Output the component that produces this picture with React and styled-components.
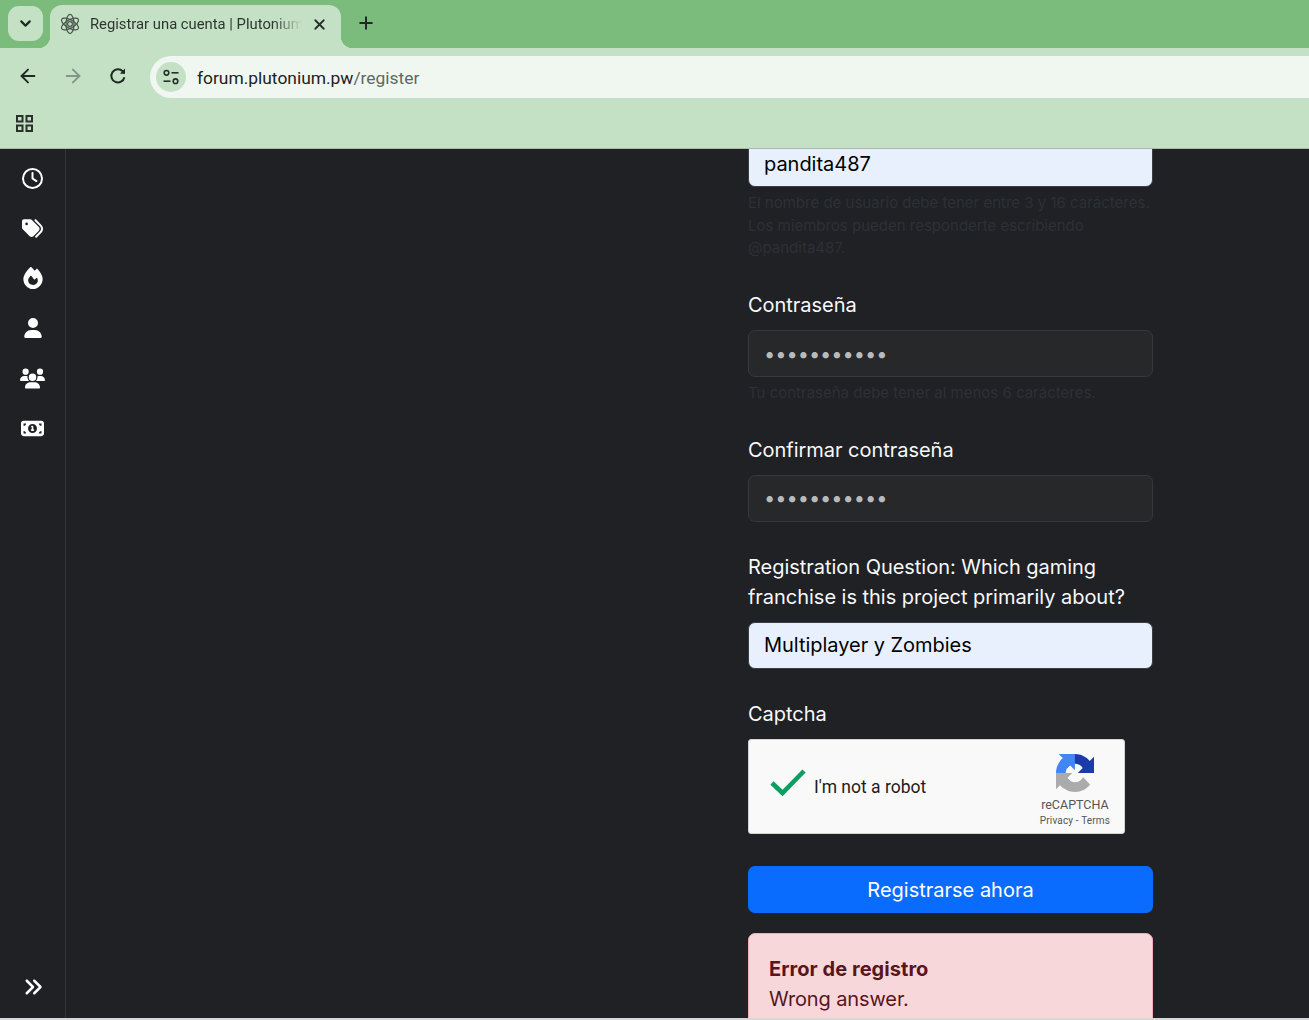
import React from 'react';
import styled, { createGlobalStyle } from 'styled-components';
import { ArrowLeft, ArrowRight, ChevronDown, Plus, X } from 'lucide-react';
import {
  FaRegClock,
  FaTags,
  FaFire,
  FaUser,
  FaUsers,
  FaMoneyBill1,
  FaAnglesRight
} from 'react-icons/fa6';

const GlobalStyle = createGlobalStyle`
  html, body {
    margin: 0;
    padding: 0;
    height: 100%;
    overflow: hidden;
    background: #1f2125;
  }
  #root {
    height: 100%;
  }
  * {
    box-sizing: border-box;
  }
`;

const AtomIcon = () => (
  <svg width="22" height="22" viewBox="0 0 22 22" fill="none" stroke="#46544a" strokeWidth="1.2">
    <ellipse cx="11" cy="11" rx="9.6" ry="4" transform="rotate(30 11 11)" />
    <ellipse cx="11" cy="11" rx="9.6" ry="4" transform="rotate(90 11 11)" />
    <ellipse cx="11" cy="11" rx="9.6" ry="4" transform="rotate(150 11 11)" />
    <circle cx="11" cy="11" r="2.4" />
  </svg>
);

const ReloadIcon = () => (
  <svg width="20" height="20" viewBox="0 0 20 20" fill="none" stroke="#1f2a22" strokeWidth="2">
    <path d="M16.4 11.2a6.6 6.6 0 1 1-1.7-5.9l1.8 1.9" />
    <path d="M17 2.6v5.2h-5.2" fill="#1f2a22" stroke="none" />
  </svg>
);

const TuneIcon = () => (
  <svg width="18" height="18" viewBox="0 0 18 18" fill="none" stroke="#26302a" strokeWidth="1.6">
    <circle cx="4.5" cy="4.8" r="2.3" />
    <path d="M9.5 4.8h7" />
    <circle cx="13.5" cy="13.2" r="2.3" />
    <path d="M1.5 13.2h7" />
  </svg>
);

const AppsIcon = () => (
  <svg width="20" height="20" viewBox="0 0 20 20" fill="none" stroke="#2a302c" strokeWidth="2">
    <rect x="2" y="2" width="5.5" height="5.5" />
    <rect x="11.5" y="2" width="5.5" height="5.5" />
    <rect x="2" y="11.5" width="5.5" height="5.5" />
    <rect x="11.5" y="11.5" width="5.5" height="5.5" />
  </svg>
);

const RecaptchaLogo = () => (
  <svg width="38" height="38" viewBox="0 0 64 64">
    <path
      d="M64 31.955l-.033-1.37V4.687l-7.16 7.16C50.948 4.674 42.033.093 32.05.093c-10.4 0-19.622 4.96-25.458 12.64l11.736 11.86a15.55 15.55 0 0 1 4.754-5.334c2.05-1.6 4.952-2.906 8.968-2.906.485 0 .86.057 1.135.163 4.976.393 9.288 3.14 11.828 7.124l-8.307 8.307 26.2.001"
      fill="#1c3aa9"
    />
    <path
      d="M31.862.001l-1.37.033H4.594l7.16 7.16C4.58 13.053 0 21.968 0 31.95c0 10.4 4.96 19.622 12.64 25.458l11.86-11.736a15.55 15.55 0 0 1-5.334-4.754c-1.6-2.05-2.906-4.952-2.906-8.968 0-.485.057-.86.163-1.135.393-4.976 3.14-9.288 7.124-11.828l8.307 8.307.001-26.2"
      fill="#4285f4"
    />
    <path
      d="M.001 32l.033 1.37v25.898l7.16-7.16c5.86 7.173 14.774 11.754 24.76 11.754 10.4 0 19.622-4.96 25.458-12.64l-11.736-11.86a15.55 15.55 0 0 1-4.754 5.334c-2.05 1.6-4.952 2.906-8.968 2.906-.485 0-.86-.057-1.135-.163-4.976-.393-9.288-3.14-11.828-7.124l8.307-8.307-26.2-.001"
      fill="#ababab"
    />
  </svg>
);

const CheckMark = () => (
  <svg width="38" height="30" viewBox="0 0 38 30" fill="none" stroke="#0f9d63" strokeWidth="4.6">
    <path d="M3 15l10.5 10L35 3" />
  </svg>
);

const navItems = [
  { Icon: FaRegClock, size: 21 },
  { Icon: FaTags, size: 21 },
  { Icon: FaFire, size: 22 },
  { Icon: FaUser, size: 20 },
  { Icon: FaUsers, size: 25 },
  { Icon: FaMoneyBill1, size: 23 }
];

const App = () => {
  return (
    <Page>
      <GlobalStyle />
      <BrowserFrame>
        <TabStrip>
          <TabSearch>
            <ChevronDown size={17} strokeWidth={3} />
          </TabSearch>
          <Tab>
            <AtomIcon />
            <TabTitle>Registrar una cuenta | Plutonium</TabTitle>
            <X size={17} strokeWidth={2.6} color="#2a302c" />
          </Tab>
          <NewTab>
            <Plus size={20} strokeWidth={2.4} />
          </NewTab>
        </TabStrip>
        <Toolbar>
          <NavButton>
            <ArrowLeft size={22} strokeWidth={2.1} />
          </NavButton>
          <NavButton $disabled>
            <ArrowRight size={22} strokeWidth={2.1} />
          </NavButton>
          <NavButton>
            <ReloadIcon />
          </NavButton>
          <Omnibox>
            <SiteInfo>
              <TuneIcon />
            </SiteInfo>
            <Url>
              forum.plutonium.pw<UrlPath>/register</UrlPath>
            </Url>
          </Omnibox>
        </Toolbar>
        <Bookmarks>
          <AppsIcon />
        </Bookmarks>
      </BrowserFrame>

      <Body>
        <Sidebar>
          <NavList>
            {navItems.map(({ Icon, size }, i) => (
              <NavItem key={i} $size={size}>
                <Icon />
              </NavItem>
            ))}
          </NavList>
          <NavItem $size={20}>
            <FaAnglesRight />
          </NavItem>
        </Sidebar>
        <Main>
          <Form>
            <Field>
              <TextInput $filled readOnly value="pandita487" />
              <Help>
                El nombre de usuario debe tener entre 3 y 16 carácteres. Los miembros pueden
                responderte escribiendo @pandita487.
              </Help>
            </Field>
            <Field>
              <Label>Contraseña</Label>
              <TextInput type="password" readOnly value="xxxxxxxxxxx" />
              <Help>Tu contraseña debe tener al menos 6 carácteres.</Help>
            </Field>
            <Field>
              <Label>Confirmar contraseña</Label>
              <TextInput $raised type="password" readOnly value="xxxxxxxxxxx" />
            </Field>
            <Field>
              <Label>Registration Question: Which gaming franchise is this project primarily about?</Label>
              <TextInput $filled $raised readOnly value="Multiplayer y Zombies" />
            </Field>
            <Field $gap={32}>
              <Label>Captcha</Label>
              <Captcha>
                <CheckMark />
                <CaptchaText>I'm not a robot</CaptchaText>
                <CaptchaBrand>
                  <RecaptchaLogo />
                  <BrandName>reCAPTCHA</BrandName>
                  <BrandLinks>Privacy - Terms</BrandLinks>
                </CaptchaBrand>
              </Captcha>
            </Field>
            <SubmitButton>Registrarse ahora</SubmitButton>
            <ErrorAlert>
              <ErrorTitle>Error de registro</ErrorTitle>
              <ErrorText>Wrong answer.</ErrorText>
            </ErrorAlert>
          </Form>
        </Main>
      </Body>
      <WindowEdge />
    </Page>
  );
};

export default App;

const Page = styled.div`
  height: 100%;
  display: flex;
  flex-direction: column;
  overflow: hidden;
  font-family: Inter, 'Liberation Sans', sans-serif;
  color: #f8f9fa;
`;

const BrowserFrame = styled.header`
  flex: none;
  background: #c5e1c5;
  border-bottom: 1px solid #aab9aa;
  font-family: Roboto, 'Open Sans', sans-serif;
`;

const TabStrip = styled.div`
  height: 48px;
  display: flex;
  align-items: flex-start;
  background: #7bbb7b;
  padding: 5px 0 0 8px;
`;

const TabSearch = styled.div`
  width: 35px;
  height: 35px;
  margin-top: 1px;
  margin-right: 7px;
  border-radius: 11px;
  background: #c5e1c5;
  color: #1f2a22;
  display: flex;
  align-items: center;
  justify-content: center;
`;

const Tab = styled.div`
  position: relative;
  width: 291px;
  height: 43px;
  padding: 0 13px 5px 9px;
  display: flex;
  align-items: center;
  gap: 9px;
  background: #c5e1c5;
  border-radius: 12px 12px 0 0;

  &::before,
  &::after {
    content: '';
    position: absolute;
    bottom: 0;
    width: 12px;
    height: 12px;
  }
  &::before {
    left: -12px;
    background: radial-gradient(circle at 0 0, transparent 12px, #c5e1c5 12.5px);
  }
  &::after {
    right: -12px;
    background: radial-gradient(circle at 100% 0, transparent 12px, #c5e1c5 12.5px);
  }
`;

const TabTitle = styled.span`
  flex: 1;
  overflow: hidden;
  white-space: nowrap;
  font-size: 14.8px;
  color: #2c352e;
  -webkit-mask-image: linear-gradient(to right, #000 86%, transparent 100%);
  mask-image: linear-gradient(to right, #000 86%, transparent 100%);
`;

const NewTab = styled.div`
  width: 20px;
  height: 20px;
  margin: 8px 0 0 15px;
  color: #1f2a22;
  display: flex;
`;

const Toolbar = styled.div`
  height: 52px;
  display: flex;
  align-items: center;
  background: #c5e1c5;
  border-radius: 12px 0 0 0;
  padding-left: 5px;
`;

const NavButton = styled.div`
  width: 45px;
  height: 36px;
  margin-top: 4px;
  display: flex;
  align-items: center;
  justify-content: center;
  color: ${props => (props.$disabled ? '#84968a' : '#1f2a22')};
`;

const Omnibox = styled.div`
  flex: 1;
  height: 42px;
  margin: 6px 0 0 10px;
  padding-left: 6px;
  display: flex;
  align-items: center;
  gap: 11px;
  background: #f0f6f0;
  border-radius: 21px 0 0 21px;
`;

const SiteInfo = styled.div`
  width: 30px;
  height: 30px;
  border-radius: 50%;
  background: #c5e1c5;
  display: flex;
  align-items: center;
  justify-content: center;
`;

const Url = styled.span`
  padding-top: 2px;
  font-size: 17.4px;
  color: #1c231e;
`;

const UrlPath = styled.span`
  color: #5c6a60;
`;

const Bookmarks = styled.div`
  height: 48px;
  padding: 14px 0 0 15px;
`;

const Body = styled.div`
  flex: 1;
  min-height: 0;
  display: flex;
  overflow: hidden;
  background: #1f2125;
`;

const Sidebar = styled.nav`
  width: 66px;
  flex: none;
  padding: 4px 0 6px;
  display: flex;
  flex-direction: column;
  justify-content: space-between;
  border-right: 1px solid #33353a;
`;

const NavList = styled.div`
  display: flex;
  flex-direction: column;
`;

const NavItem = styled.div`
  height: 50px;
  display: flex;
  align-items: center;
  justify-content: center;
  color: #fff;
  font-size: ${props => props.$size}px;
`;

const Main = styled.main`
  flex: 1;
  min-width: 0;
  padding-left: 682px;
`;

const Form = styled.div`
  width: 405px;
  margin-top: -9px;
  display: flex;
  flex-direction: column;
`;

const Field = styled.div`
  margin-bottom: ${props => props.$gap || 30}px;
`;

const Label = styled.label`
  display: block;
  font-size: 20px;
  line-height: 30px;
  margin-bottom: 10px;
  letter-spacing: -0.03px;
  color: #f8f9fa;
`;

const TextInput = styled.input`
  display: block;
  width: 100%;
  height: 47px;
  padding: 0 15px ${props => (props.$raised ? 2 : 0)}px;
  font-family: inherit;
  font-size: 20px;
  letter-spacing: -0.03px;
  border-radius: 7px;
  outline: none;
  border: 1px solid ${props => (props.$filled ? '#3b3e44' : '#36383b')};
  background: ${props => (props.$filled ? '#e8f0fe' : '#27282a')};
  color: ${props => (props.$filled ? '#000' : '#b9babb')};
`;

const Help = styled.div`
  margin: 5.25px 0 0.25px;
  font-size: 15px;
  line-height: 22.5px;
  color: #2d3036;
`;

const Captcha = styled.div`
  width: 377px;
  height: 95px;
  display: flex;
  align-items: center;
  padding: 0 14px 0 20px;
  background: #f9f9f9;
  border: 1px solid #d3d3d3;
  border-radius: 3px;
  font-family: Roboto, 'Liberation Sans', sans-serif;

  & > svg {
    margin-bottom: 8px;
  }
`;

const CaptchaText = styled.span`
  margin-left: 7px;
  font-size: 17.5px;
  color: #1c1c1c;
`;

const CaptchaBrand = styled.div`
  margin: 9px 0 0 auto;
  display: flex;
  flex-direction: column;
  align-items: center;
  color: #555;
`;

const BrandName = styled.div`
  font-size: 12.5px;
  line-height: 16px;
  margin-top: 5px;
`;

const BrandLinks = styled.div`
  font-size: 10px;
  line-height: 14px;
  margin-top: 1px;
  letter-spacing: 0.15px;
`;

const SubmitButton = styled.button`
  height: 47px;
  border: none;
  border-radius: 7px;
  background: #0a6cff;
  color: #fff;
  font-family: inherit;
  font-size: 20px;
`;

const ErrorAlert = styled.div`
  margin-top: 20px;
  padding: 20px;
  border: 1px solid #f1aeb5;
  border-radius: 7px;
  background: #f8d7da;
  color: #58151c;
  font-size: 20px;
  line-height: 30px;
`;

const ErrorTitle = styled.div`
  font-weight: 700;
  letter-spacing: 0.05px;
`;

const ErrorText = styled.div`
  letter-spacing: -0.12px;
`;

const WindowEdge = styled.div`
  flex: none;
  height: 2px;
  background: #d6d8d6;
`;
